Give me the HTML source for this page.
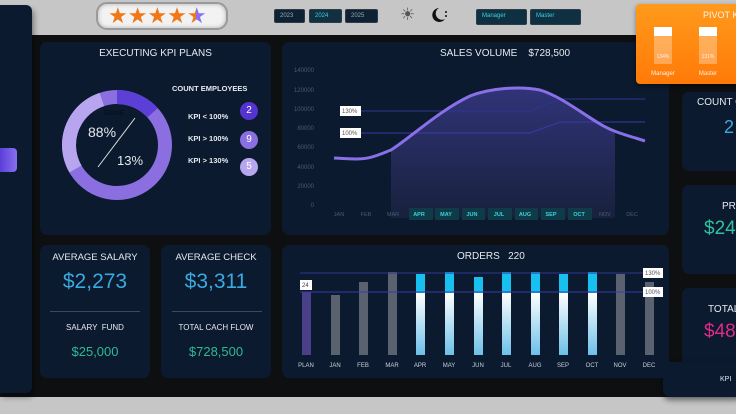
<!DOCTYPE html>
<html><head><meta charset="utf-8"><style>
*{margin:0;padding:0;box-sizing:border-box}
body{width:736px;height:414px;overflow:hidden;background:#c6c6c6;font-family:"Liberation Sans",sans-serif;position:relative}
.a{position:absolute}
.p{position:absolute;background:#0b1a2e;border-radius:7px}
.t{position:absolute;color:#e6e9ef;text-align:center;white-space:nowrap}
.btn{position:absolute;background:#0f2233;border:1px solid #2a3b4a;border-radius:2px;font-size:6px;color:#9aa;padding:3px 0 0 5px}
.z{z-index:5}
</style></head><body>
<div class="a" style="left:0;top:35px;width:736px;height:362px;background:#0e0f11"></div>
<div class="a" style="left:0;top:5px;width:32px;height:388px;background:#0b1a2e;border-radius:0 6px 6px 0;box-shadow:2px 4px 6px rgba(0,0,0,.4)"></div>
<div class="a" style="left:0;top:148px;width:17px;height:24px;background:linear-gradient(90deg,#5b3fd6,#8a6ff0);border-radius:0 4px 4px 0"></div>
<!-- stars -->
<div class="a" style="left:96px;top:2px;width:132px;height:28px;background:#f2f2f2;border:2px solid #9a9a9a;border-radius:11px;box-shadow:inset 0 0 4px #aaa"></div>
<div class="a" style="left:108px;top:3px;font-size:22px;letter-spacing:0px;color:#f07818">★★★★<span style="background:linear-gradient(90deg,#f07818 45%,#8a6ff0 45%);-webkit-background-clip:text;color:transparent">★</span></div>
<div class="btn" style="left:274px;top:9px;width:31px;height:14px">2023</div>
<div class="btn" style="left:309px;top:9px;width:33px;height:14px;color:#3fd0e0;background:#123040">2024</div>
<div class="btn" style="left:345px;top:9px;width:33px;height:14px">2025</div>
<div class="a" style="left:400px;top:5px;font-size:17px;color:#555">☀</div>
<svg class="a" style="left:431px;top:7px" width="18" height="17"><path d="M8,1 A7,7 0 1 0 14,12 A6,6 0 0 1 8,1Z" fill="#111"/><circle cx="15" cy="5" r="1" fill="#111"/><circle cx="15" cy="9" r="1" fill="#111"/></svg>
<div class="btn" style="left:476px;top:9px;width:51px;height:16px;color:#3fd0e0;background:#0f3040">Manager</div>
<div class="btn" style="left:530px;top:9px;width:51px;height:16px;color:#3fd0e0;background:#0f3040">Master</div>
<!-- pivot -->
<div class="a z" style="left:636px;top:4px;width:110px;height:80px;background:linear-gradient(#ff9a1c,#ff7a08);border-radius:4px;box-shadow:0 2px 5px rgba(0,0,0,.4)"></div>
<div class="t z" style="left:703px;top:10px;font-size:9px;color:#fff5e8">PIVOT K</div>
<div class="a z" style="left:654px;top:27px;width:18px;height:37px;background:rgba(255,255,255,.3)"></div>
<div class="a z" style="left:654px;top:27px;width:18px;height:9px;background:#fff"></div>
<div class="a z" style="left:699px;top:27px;width:18px;height:37px;background:rgba(255,255,255,.3)"></div>
<div class="a z" style="left:699px;top:27px;width:18px;height:9px;background:#fff"></div>
<div class="t z" style="left:654px;top:54px;font-size:5px;width:18px;color:#fff0e0">134%</div>
<div class="t z" style="left:699px;top:54px;font-size:5px;width:18px;color:#fff0e0">131%</div>
<div class="t z" style="left:648px;top:71px;font-size:6px;width:30px;color:#fff0e0">Manager</div>
<div class="t z" style="left:693px;top:71px;font-size:6px;width:30px;color:#fff0e0">Master</div>
<!-- right column -->
<div class="p" style="left:682px;top:92px;width:60px;height:79px"></div>
<div class="t" style="left:697px;top:97px;font-size:10px">COUNT C</div>
<div class="t" style="left:724px;top:117px;font-size:18px;color:#3aa9e0">2</div>
<div class="p" style="left:682px;top:185px;width:60px;height:89px"></div>
<div class="t" style="left:722px;top:201px;font-size:10px">PR</div>
<div class="t" style="left:704px;top:218px;font-size:19px;color:#30c0a0">$24</div>
<div class="p" style="left:682px;top:288px;width:60px;height:100px"></div>
<div class="t" style="left:708px;top:304px;font-size:10px">TOTAL</div>
<div class="t" style="left:704px;top:321px;font-size:19px;color:#e02a88">$48</div>
<div class="p" style="left:663px;top:362px;width:80px;height:35px;box-shadow:0 3px 6px rgba(0,0,0,.5)"></div>
<div class="t" style="left:720px;top:376px;font-size:7px">KPI</div>
<!-- panel 1 -->
<div class="p" style="left:40px;top:42px;width:231px;height:193px"></div>
<div class="t" style="left:40px;top:48px;width:231px;font-size:10px">EXECUTING KPI PLANS</div>
<svg class="a" style="left:40px;top:42px" width="231" height="193">
<g transform="translate(77,103)" fill="none" stroke-width="14">
<circle r="48" stroke="#8b6fe0"/>
<circle r="48" stroke="#5b3fd6" stroke-dasharray="40 400" transform="rotate(-90)"/>
<circle r="48" stroke="#b7a6ef" stroke-dasharray="85 400" transform="rotate(150)"/>
<line x1="18" y1="-27" x2="-19" y2="22" stroke="#ddd" stroke-width="1"/>
</g></svg>
<div class="t" style="left:104px;top:110px;font-size:7px;color:#0a1020;font-weight:bold">DONE</div>
<div class="t" style="left:88px;top:124px;font-size:14px">88%</div>
<div class="t" style="left:117px;top:153px;font-size:13px">13%</div>
<div class="t" style="left:172px;top:84px;font-size:7.5px;font-weight:bold">COUNT EMPLOYEES</div>
<div class="t" style="left:188px;top:112px;font-size:7.5px;font-weight:bold">KPI &lt; 100%</div>
<div class="t" style="left:188px;top:134px;font-size:7.5px;font-weight:bold">KPI &gt; 100%</div>
<div class="t" style="left:188px;top:156px;font-size:7.5px;font-weight:bold">KPI &gt; 130%</div>
<div class="a" style="left:240px;top:102px;width:18px;height:18px;border-radius:50%;background:#5533d0;color:#fff;font-size:10px;text-align:center;line-height:18px">2</div>
<div class="a" style="left:240px;top:131px;width:18px;height:18px;border-radius:50%;background:#8a6fe0;color:#fff;font-size:10px;text-align:center;line-height:18px">9</div>
<div class="a" style="left:240px;top:158px;width:18px;height:18px;border-radius:50%;background:#b6a6ee;color:#fff;font-size:10px;text-align:center;line-height:18px">5</div>
<!-- panel 2 -->
<div class="p" style="left:282px;top:42px;width:387px;height:193px"></div>
<div class="t" style="left:440px;top:48px;font-size:10px">SALES VOLUME &nbsp;&nbsp; $728,500</div>
<svg class="a" style="left:0;top:0" width="736" height="414" font-family="Liberation Sans" font-size="6" fill="#4d5a6a">
<defs><linearGradient id="g" x1="0" y1="0" x2="0" y2="1"><stop offset="0" stop-color="#3a3a8a"/><stop offset="1" stop-color="#1a2340"/></linearGradient>
<linearGradient id="w" x1="0" y1="0" x2="0" y2="1"><stop offset="0" stop-color="#fff"/><stop offset="1" stop-color="#6cc0e8"/></linearGradient></defs>
<g text-anchor="end"><text x="314" y="72">140000</text><text x="314" y="92">120000</text><text x="314" y="111">100000</text><text x="314" y="130">80000</text><text x="314" y="149">60000</text><text x="314" y="169">40000</text><text x="314" y="188">20000</text><text x="314" y="207">0</text></g>
<path d="M391,150 C410,138 440,110 470,96 C490,88 520,86 540,90 C560,96 580,112 600,124 C606,128 610,131 615,132 L615,218 L391,218Z" fill="url(#g)" opacity=".8"/>
<path d="M340,111 H530 L560,99 H645" stroke="#2c3590" fill="none" stroke-width="1"/>
<path d="M340,133 H530 L560,122 H645" stroke="#3b3aa8" fill="none" stroke-width="1"/>
<path d="M334,158 C350,159 362,160 372,157 C382,154 388,151 391,150 C410,138 440,110 470,96 C490,88 520,86 540,90 C560,96 580,112 600,124 C615,133 630,136 645,141" stroke="#8a70e8" stroke-width="3" fill="none"/>
<rect x="340" y="106" width="21" height="10" fill="#fff"/><text x="342" y="113" fill="#555">130%</text>
<rect x="340" y="128" width="21" height="10" fill="#fff"/><text x="342" y="135" fill="#555">100%</text>
<g fill="#0f3a48"><rect x="409" y="208" width="24" height="12"/><rect x="435" y="208" width="24" height="12"/><rect x="462" y="208" width="23" height="12"/><rect x="488" y="208" width="24" height="12"/><rect x="515" y="208" width="23" height="12"/><rect x="541" y="208" width="24" height="12"/><rect x="568" y="208" width="24" height="12"/></g>
<g text-anchor="middle" font-size="5.5"><text x="339" y="216">JAN</text><text x="366" y="216">FEB</text><text x="393" y="216">MAR</text>
<g fill="#3fd0e0" font-weight="bold"><text x="419" y="216">APR</text><text x="446" y="216">MAY</text><text x="472" y="216">JUN</text><text x="499" y="216">JUL</text><text x="525" y="216">AUG</text><text x="551" y="216">SEP</text><text x="579" y="216">OCT</text></g>
<text x="605" y="216">NOV</text><text x="632" y="216">DEC</text></g>
</svg>
<!-- row 2 -->
<div class="p" style="left:40px;top:245px;width:110px;height:133px"></div>
<div class="t" style="left:40px;top:252px;width:110px;font-size:9.5px">AVERAGE SALARY</div>
<div class="t" style="left:40px;top:270px;width:110px;font-size:21px;color:#3aa9e0">$2,273</div>
<div class="a" style="left:50px;top:311px;width:90px;height:1px;background:#3a4a5a"></div>
<div class="t" style="left:40px;top:323px;width:110px;font-size:8px">SALARY &nbsp;FUND</div>
<div class="t" style="left:40px;top:344px;width:110px;font-size:13px;color:#30b898">$25,000</div>
<div class="p" style="left:161px;top:245px;width:110px;height:133px"></div>
<div class="t" style="left:161px;top:252px;width:110px;font-size:9.5px">AVERAGE CHECK</div>
<div class="t" style="left:161px;top:270px;width:110px;font-size:21px;color:#3aa9e0">$3,311</div>
<div class="a" style="left:172px;top:311px;width:90px;height:1px;background:#3a4a5a"></div>
<div class="t" style="left:161px;top:323px;width:110px;font-size:8px">TOTAL CACH FLOW</div>
<div class="t" style="left:161px;top:344px;width:110px;font-size:13px;color:#30b898">$728,500</div>
<div class="p" style="left:282px;top:245px;width:387px;height:133px"></div>
<div class="t" style="left:457px;top:251px;font-size:10px">ORDERS &nbsp; 220</div>
<svg class="a" style="left:0;top:0" width="736" height="414" font-family="Liberation Sans" font-size="6">
<g fill="#5a6270"><rect x="331" y="295" width="9" height="60"/><rect x="359" y="282" width="9" height="73"/><rect x="388" y="272" width="9" height="83"/><rect x="616" y="274" width="9" height="81"/><rect x="645" y="282" width="9" height="73"/></g>
<rect x="302" y="292" width="9" height="63" fill="#4a3f8a"/>
<g fill="#18c0f0"><rect x="416" y="274" width="9" height="19"/><rect x="445" y="272" width="9" height="21"/><rect x="474" y="277" width="9" height="16"/><rect x="502" y="272" width="9" height="21"/><rect x="531" y="272" width="9" height="21"/><rect x="559" y="274" width="9" height="19"/><rect x="588" y="272" width="9" height="21"/></g>
<g fill="url(#w)"><rect x="416" y="293" width="9" height="62"/><rect x="445" y="293" width="9" height="62"/><rect x="474" y="293" width="9" height="62"/><rect x="502" y="293" width="9" height="62"/><rect x="531" y="293" width="9" height="62"/><rect x="559" y="293" width="9" height="62"/><rect x="588" y="293" width="9" height="62"/></g>
<line x1="300" y1="273" x2="645" y2="273" stroke="#2c3590" stroke-width="1"/>
<line x1="300" y1="292" x2="645" y2="292" stroke="#3b3aa8" stroke-width="1"/>
<rect x="300" y="280" width="12" height="10" fill="#fff"/><text x="302" y="287" fill="#444">24</text>
<rect x="643" y="268" width="20" height="10" fill="#fff"/><text x="645" y="275" fill="#555">130%</text>
<rect x="643" y="287" width="20" height="10" fill="#fff"/><text x="645" y="294" fill="#555">100%</text>
<g text-anchor="middle" fill="#c8d0dc" font-size="6"><text x="306" y="367">PLAN</text><text x="335" y="367">JAN</text><text x="363" y="367">FEB</text><text x="392" y="367">MAR</text><text x="420" y="367">APR</text><text x="449" y="367">MAY</text><text x="478" y="367">JUN</text><text x="506" y="367">JUL</text><text x="535" y="367">AUG</text><text x="563" y="367">SEP</text><text x="592" y="367">OCT</text><text x="620" y="367">NOV</text><text x="649" y="367">DEC</text></g>
</svg>
</body></html>
